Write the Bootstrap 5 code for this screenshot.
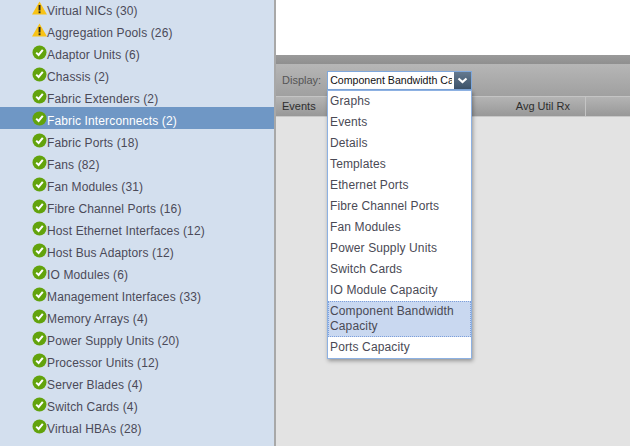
<!DOCTYPE html>
<html lang="en">
<head>
    <meta charset="UTF-8">
    <title>Fabric Interconnects</title>
    <link href="https://cdn.jsdelivr.net/npm/bootstrap@5.3.2/dist/css/bootstrap.min.css" rel="stylesheet">
    <style>
        html, body { height: 100%; overflow: hidden; }
        body { font-family: "Liberation Sans", Arial, sans-serif; font-size: 12px; color: #4a4a55; background: #e3e3e3; }
        .app-shell { height: 446px; }
        .side-tree { width: 276px; background: #d3dfee; border-right: 2px solid #a8a8a8; overflow: hidden; }
        .tree-list { margin-top: -3px; }
        .tree-row { height: 22px; padding-left: 32px; background: transparent; color: #4b4a58; line-height: 22px; white-space: nowrap; letter-spacing: .13px; }
        .tree-row span { padding-top: 5px; }
        .tree-row.is-picked { background: #6f97c5; color: #fff; }
        .tree-row svg { width: 15px; height: 15px; flex: none; }
        .main-pane { width: 354px; position: relative; }
        .white-area { height: 55px; background: #fff; }
        .grey-band { height: 9px; background: linear-gradient(#9a9a9a, #8f8f8f); }
        .tool-row { height: 32px; background: linear-gradient(#b6b6b6, #a0a0a0); padding-left: 6px; color: #555; font-size: 11px; }
        .combo-box { width: 145px; height: 19px; margin-left: 6px; border: 1px solid #7fa8dc; background: #fff; color: #111; font-size: 10.6px; line-height: 17px; }
        .combo-text { width: 124px; margin-left: 2px; margin-right: 2px; overflow: hidden; white-space: nowrap; }
        .combo-arrow { width: 17px; background: linear-gradient(#64798f, #3c5268); }
        .head-row { height: 21px; background: linear-gradient(#b4b4b4, #989898); border-top: 1px solid #c4c4c4; border-bottom: 1px solid #c8c8c8; color: #2e2e2e; font-size: 11px; line-height: 19px; }
        .head-first { width: 52px; padding-left: 6px; }
        .head-mid { width: 258px; text-align: right; padding-right: 15px; border-right: 1px solid #c4c4c4; }
        .combo-menu { display: block; position: absolute; left: 51px; top: 90px; width: 145px; min-width: 0; padding: 0; margin: 0; border: 1px solid #8db1e2; border-radius: 0; box-shadow: 1px 2px 4px rgba(0,0,0,.35); font-size: 12px; letter-spacing: .13px; }
        .combo-menu .dropdown-item { padding: 0 2px; height: 21px; line-height: 21px; color: #4a4a55; white-space: normal; }
        .combo-menu .dropdown-item.is-over { height: 36px; line-height: 15px; padding-top: 3px; background: #c9d8f0; outline: 1px dotted #7c9fdc; outline-offset: -1px; }
    </style>
</head>
<body>

<div class="d-flex app-shell">
    <!-- Left tree -->
    <div class="side-tree">
        <div id="treeList" class="list-group list-group-flush tree-list"></div>
    </div>

    <!-- Right pane -->
    <div class="main-pane d-flex flex-column">
        <div class="white-area"></div>
        <div class="grey-band"></div>
        <div class="tool-row d-flex align-items-center">
            <span>Display:</span>
            <div class="combo-box d-flex">
                <div class="combo-text">Component Bandwidth Capacity</div>
                <div class="combo-arrow d-flex align-items-center justify-content-center">
                    <svg width="11" height="7" viewBox="0 0 11 7"><path d="M1.5 1.5 L5.5 5 L9.5 1.5" fill="none" stroke="#fff" stroke-width="2.2"/></svg>
                </div>
            </div>
        </div>
        <div class="head-row d-flex">
            <div class="head-first">Events</div>
            <div class="head-mid">Avg Util Rx</div>
        </div>
        <ul id="comboMenu" class="dropdown-menu combo-menu"></ul>
    </div>
</div>

<script src="https://cdn.jsdelivr.net/npm/bootstrap@5.3.2/dist/js/bootstrap.bundle.min.js"></script>
<script>
    const warnIcon = '<svg viewBox="0 0 15 15"><path d="M7.5 0.5 L15 13.5 L0 13.5 Z" fill="#f8c316"/><rect x="6.6" y="4" width="1.9" height="5.5" fill="#222"/><rect x="6.6" y="10.3" width="1.9" height="1.9" fill="#222"/></svg>';
    const okIcon = '<svg viewBox="0 0 15 15"><circle cx="7.5" cy="7.5" r="7" fill="#62a30c"/><path d="M4.2 7.6 L6.6 10 L10.8 4.8" fill="none" stroke="#fff" stroke-width="2"/></svg>';

    const rows = [
        ["Virtual NICs (30)", 1], ["Aggregation Pools (26)", 1], ["Adaptor Units (6)"], ["Chassis (2)"],
        ["Fabric Extenders (2)"], ["Fabric Interconnects (2)"], ["Fabric Ports (18)"], ["Fans (82)"],
        ["Fan Modules (31)"], ["Fibre Channel Ports (16)"], ["Host Ethernet Interfaces (12)"],
        ["Host Bus Adaptors (12)"], ["IO Modules (6)"], ["Management Interfaces (33)"], ["Memory Arrays (4)"],
        ["Power Supply Units (20)"], ["Processor Units (12)"], ["Server Blades (4)"], ["Switch Cards (4)"], ["Virtual HBAs (28)"]
    ];
    document.getElementById("treeList").innerHTML = rows.map((r, i) =>
        `<div class="tree-row d-flex align-items-center${i === 5 ? " is-picked" : ""}">${r[1] ? warnIcon : okIcon}<span>${r[0]}</span></div>`
    ).join("");

    const items = ["Graphs", "Events", "Details", "Templates", "Ethernet Ports", "Fibre Channel Ports", "Fan Modules",
        "Power Supply Units", "Switch Cards", "IO Module Capacity", "Component Bandwidth Capacity", "Ports Capacity"];
    document.getElementById("comboMenu").innerHTML = items.map(t =>
        `<li><span class="dropdown-item${t.startsWith("Component") ? " is-over" : ""}">${t}</span></li>`
    ).join("");
</script>

</body>
</html>
